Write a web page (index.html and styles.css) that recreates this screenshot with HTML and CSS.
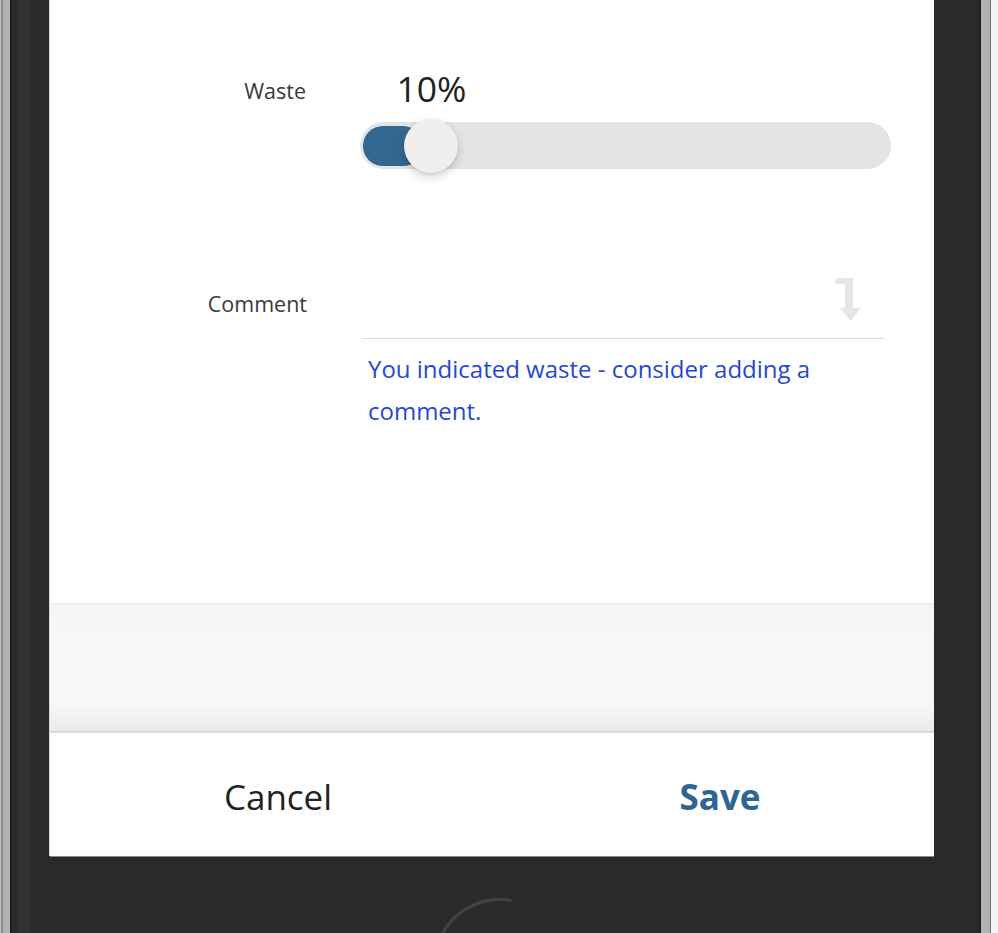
FILE: index.html
```html
<!DOCTYPE html>
<html lang="en">
<head>
<meta charset="utf-8">
<title>Waste</title>
<link rel="stylesheet" href="styles.css">
</head>
<body>
<div class="device">
  <div class="screen">
    <div class="form">
      <div class="label label-waste">Waste</div>
      <div class="field">
        <div class="value">10%</div>
        <div class="track">
          <div class="fill"></div>
          <div class="thumb"></div>
        </div>
      </div>

      <div class="label label-comment">Comment</div>
      <div class="input">
        <svg class="resize-icon" width="27" height="45" viewBox="0 0 27 45" aria-hidden="true">
          <polygon points="2,1 18,1 18,31 26,31 15.5,44 5,31 10,31 10,7 0,7 0,3" fill="#e6e6e6"/>
        </svg>
      </div>

      <div class="hint">You indicated waste - consider adding a comment.</div>
    </div>
    <div class="tray"></div>
    <div class="actions">
      <button class="btn btn-cancel">Cancel</button>
      <button class="btn btn-save">Save</button>
    </div>
  </div>
  <div class="home-button"></div>
</div>
</body>
</html>
```

FILE: styles.css
```css
html, body {
  margin: 0;
  padding: 0;
  overflow: hidden;
}

body {
  width: 998px;
  height: 933px;
  font-family: "Open Sans", "Noto Sans", sans-serif;
  background: linear-gradient(to right,
    #c4c4c4 0 1px,
    #8c8c8c 1px 3px,
    #b3b3b3 3px 10px,
    #1e1e1e 10px 12px,
    #2b2b2b 12px 18px,
    #323232 18px 30px,
    #2a2a2a 30px 979px,
    #202020 979px 981px,
    #b3b3b3 981px 990px,
    #707070 990px 991px,
    #f4f4f4 991px);
}

.device {
  position: relative;
  height: 933px;
  overflow: hidden;
}

.screen {
  margin-left: 50px;
  width: 884px;
  height: 856px;
  background: #fff;
  display: flex;
  flex-direction: column;
  box-shadow: 0 1px 0 #8a8a8a, -1px 0 0 #d6d6d6;
}

/* form */
.form {
  height: 603px;
  box-sizing: border-box;
  padding-top: 64px;
  display: grid;
  grid-template-columns: 257px 531px;
  column-gap: 53px;
  align-content: start;
}

.label {
  text-align: right;
  color: #3a3a3a;
  font-size: 21.5px;
  line-height: 28px;
}

.label-waste {
  padding-top: 13px;
  margin-right: 1px;
}

.label-comment {
  align-self: center;
  margin-top: 100px;
  margin-right: 0;
}

.field {
  display: flex;
  flex-direction: column;
}

.value {
  width: 143px;
  text-align: center;
  font-size: 35.5px;
  line-height: 48px;
  color: #222;
}

.track {
  position: relative;
  margin-top: 10px;
  height: 47px;
  border-radius: 24px;
  background: #e4e4e4;
}

.fill {
  position: absolute;
  left: 3px;
  top: 4px;
  bottom: 3px;
  width: 60px;
  border-radius: 20px;
  background: #336791;
}

.thumb {
  position: absolute;
  left: 44px;
  top: -3px;
  width: 54px;
  height: 54px;
  border-radius: 50%;
  background: #efefef;
  box-shadow: 0 4px 10px rgba(0, 0, 0, 0.18), 0 1px 2px rgba(0, 0, 0, 0.08);
}

.input {
  margin-top: 100px;
  margin-left: 2px;
  margin-right: 6px;
  height: 70px;
  border-bottom: 1px solid #dcdcdc;
  display: flex;
  justify-content: flex-end;
  align-items: flex-start;
  padding-right: 23px;
  padding-top: 8px;
  box-sizing: border-box;
}

.resize-icon {
  display: block;
}

.hint {
  grid-column: 2;
  margin-top: 9px;
  padding-left: 8px;
  padding-right: 40px;
  color: #2748d0;
  font-size: 24px;
  line-height: 42px;
}

/* tray */
.tray {
  height: 130px;
  background: linear-gradient(to bottom,
    #ebeced 0,
    #f5f6f8 3px,
    #f7f8f9 100px,
    #ebebec 127px,
    #d9d9d9 129px,
    #d9d9d9 130px);
}

/* actions */
.actions {
  flex: 1;
  display: flex;
}

.btn {
  flex: 1 1 0;
  border: 0;
  background: transparent;
  font-family: "Open Sans", "Noto Sans", sans-serif;
  font-size: 35px;
  padding: 4px 0 0 14px;
  margin: 0;
  cursor: pointer;
}

.btn-cancel {
  color: #222;
  font-weight: 400;
}

.btn-save {
  color: #2f6592;
  font-weight: 700;
}

.home-button {
  position: absolute;
  left: 433px;
  top: 898px;
  width: 134px;
  height: 134px;
  box-sizing: border-box;
  border-radius: 50%;
  border: 3px solid transparent;
  border-top-color: #444;
  transform: rotate(-35deg);
  filter: blur(0.6px);
}
```
